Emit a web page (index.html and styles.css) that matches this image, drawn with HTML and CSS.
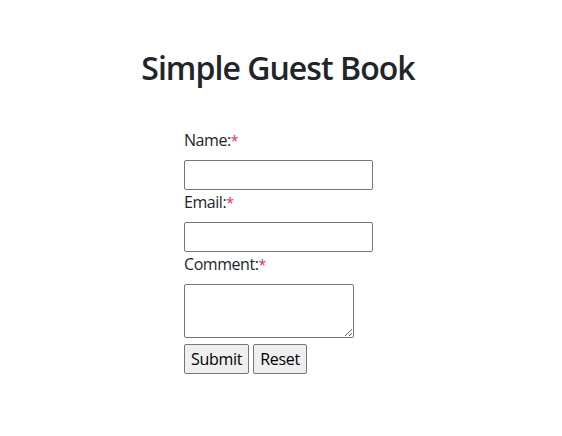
FILE: index.html
```html
<!DOCTYPE html>
<html lang="en">
<head>
<meta charset="utf-8">
<title>Simple Guest Book</title>
<link rel="stylesheet" href="styles.css">
</head>
<body>
<div class="page">
  <h2 class="title">Simple Guest Book</h2>
  <form class="guest-form">
    <label class="field-label" for="name">Name:<span class="req">*</span></label>
    <input class="text-input" id="name" type="text">
    <label class="field-label" for="email">Email:<span class="req">*</span></label>
    <input class="text-input" id="email" type="email">
    <label class="field-label" for="comment">Comment:<span class="req">*</span></label>
    <textarea class="comment-input" id="comment"></textarea>
    <div class="actions">
      <button class="btn" type="submit">Submit</button>
      <button class="btn" type="reset">Reset</button>
    </div>
  </form>
</div>
</body>
</html>
```
FILE: styles.css
```css
html, body {
  margin: 0;
  padding: 0;
  background: #ffffff;
}
body {
  font-family: "Open Sans", "Noto Sans", sans-serif;
  font-size: 16px;
  line-height: 1.5;
  color: #212529;
}
.page {
  width: 556px;
  padding-top: 49px;
}
.title {
  margin: 0;
  font-size: 32px;
  font-weight: 600;
  line-height: 1.2;
  letter-spacing: -0.95px;
  text-align: center;
  color: #212529;
}
.guest-form {
  margin: 41px 0 0 184px;
  display: flex;
  flex-direction: column;
  align-items: flex-start;
}
.field-label {
  display: block;
  height: 24px;
  margin-bottom: 8px;
  line-height: 24px;
  letter-spacing: -0.45px;
}
.req {
  color: #e0313f;
  font-size: 14px;
  line-height: 1;
}
.text-input {
  box-sizing: border-box;
  width: 189px;
  height: 30px;
  margin: 0;
  padding: 1px 2px;
  border: 1px solid #767676;
  border-radius: 2px;
  font: inherit;
  background: #fff;
}
.comment-input {
  box-sizing: border-box;
  width: 170px;
  height: 54px;
  margin: 0;
  padding: 2px;
  border: 1px solid #767676;
  border-radius: 2px;
  font: inherit;
  resize: both;
}
.actions {
  display: flex;
  gap: 4px;
  margin-top: 6px;
}
.btn {
  box-sizing: border-box;
  height: 30px;
  margin: 0;
  padding: 1px 6px;
  border: 1px solid #767676;
  border-radius: 2px;
  background: #efefef;
  color: #000;
  font: inherit;
  line-height: 24px;
  letter-spacing: -0.3px;
}
```
